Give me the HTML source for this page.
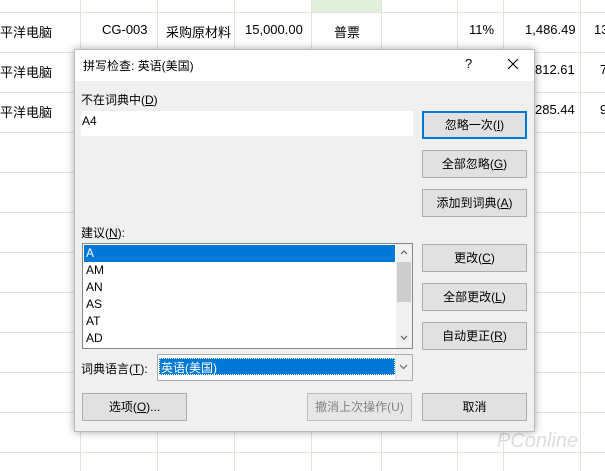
<!DOCTYPE html>
<html><head><meta charset="utf-8"><style>
*{margin:0;padding:0;box-sizing:border-box}
body{width:605px;height:471px;overflow:hidden;background:#fff;position:relative;font-family:"Liberation Sans","Noto Sans CJK SC",sans-serif;font-size:12px;color:#000}
.a{position:absolute}
.h{position:absolute;left:0;width:605px;height:1px;background:#dfe6da}
.v{position:absolute;top:0;width:1px;height:471px;background:#dfe6da}
.t{position:absolute;font-size:13px;white-space:nowrap}
.dlg{position:absolute;left:74px;top:49px;width:461px;height:383px;background:#f0f0f0;box-shadow:0 0 8px rgba(0,0,0,.35);border:1px solid #bbb}
.btn{position:absolute;width:105px;height:28px;background:#e1e1e1;border:1px solid #adadad;text-align:center;line-height:26px;font-size:12px}
.u{text-decoration:underline}
</style></head><body>
<div class="a" style="left:312px;top:0;width:69px;height:12px;background:#e2efda"></div>
<div class="h" style="top:12px"></div><div class="h" style="top:52px"></div><div class="h" style="top:92px"></div><div class="h" style="top:132px"></div><div class="h" style="top:172px"></div><div class="h" style="top:212px"></div><div class="h" style="top:252px"></div><div class="h" style="top:292px"></div><div class="h" style="top:332px"></div><div class="h" style="top:372px"></div><div class="h" style="top:412px"></div><div class="h" style="top:452px"></div>
<div class="v" style="left:80px"></div><div class="v" style="left:157px"></div><div class="v" style="left:234px"></div><div class="v" style="left:311px"></div><div class="v" style="left:381px"></div><div class="v" style="left:457px"></div><div class="v" style="left:503px"></div><div class="v" style="left:580px"></div>
<div class="t" style="left:0;top:22px">平洋电脑</div>
<div class="t" style="left:102px;top:22px">CG-003</div>
<div class="t" style="left:166px;top:22px">采购原材料</div>
<div class="t" style="left:245px;top:22px">15,000.00</div>
<div class="t" style="left:334px;top:22px">普票</div>
<div class="t" style="left:469px;top:22px">11%</div>
<div class="t" style="left:525px;top:22px">1,486.49</div>
<div class="t" style="left:594px;top:22px">13</div>
<div class="t" style="left:0;top:62px">平洋电脑</div>
<div class="t" style="left:535px;top:62px">812.61</div>
<div class="t" style="left:600px;top:62px">7</div>
<div class="t" style="left:0;top:102px">平洋电脑</div>
<div class="t" style="left:535px;top:102px">285.44</div>
<div class="t" style="left:600px;top:102px">9</div>
<div class="t" style="left:497px;top:430px;font-size:20px;color:#ddd;font-style:italic">PConline</div>

<div class="dlg">
<div class="a" style="left:0;top:0;width:459px;height:31px;background:#fff"></div>
<div class="t" style="left:8px;top:7px;font-size:12px">拼写检查: 英语(美国)</div>
<div class="t" style="left:390px;top:6px;font-size:13px">?</div>
<svg class="a" style="left:432px;top:8px" width="12" height="12"><path d="M1 1L11 11M11 1L1 11" stroke="#000" stroke-width="1.1"/></svg>
<div class="t" style="left:6px;top:41px;font-size:12px">不在词典中(<span class="u">D</span>)</div>
<div class="a" style="left:6px;top:61px;width:332px;height:25px;background:#fff"></div>
<div class="t" style="left:7px;top:64px;font-size:12px">A4</div>
<div class="btn" style="left:347px;top:61px;border:2px solid #0078d7;line-height:24px">忽略一次(<span class="u">I</span>)</div>
<div class="btn" style="left:347px;top:100px">全部忽略(<span class="u">G</span>)</div>
<div class="btn" style="left:347px;top:139px">添加到词典(<span class="u">A</span>)</div>
<div class="t" style="left:6px;top:174px;font-size:12px">建议(<span class="u">N</span>):</div>
<div class="a" style="left:7px;top:193px;width:331px;height:106px;background:#fff;border:1px solid #828790"></div>
<div class="a" style="left:9px;top:195px;width:311px;height:17px;background:#0078d7"></div>
<div class="t" style="left:11px;top:196px;font-size:12px;color:#fff">A</div>
<div class="t" style="left:11px;top:213px;font-size:12px">AM</div>
<div class="t" style="left:11px;top:230px;font-size:12px">AN</div>
<div class="t" style="left:11px;top:247px;font-size:12px">AS</div>
<div class="t" style="left:11px;top:264px;font-size:12px">AT</div>
<div class="t" style="left:11px;top:281px;font-size:12px">AD</div>
<div class="a" style="left:321px;top:194px;width:16px;height:104px;background:#f0f0f0"></div>
<div class="a" style="left:322px;top:212px;width:14px;height:40px;background:#cdcdcd"></div>
<svg class="a" style="left:325px;top:199px" width="8" height="6"><path d="M1 5L4 2L7 5" stroke="#606060" fill="none" stroke-width="1.2"/></svg>
<svg class="a" style="left:325px;top:285px" width="8" height="6"><path d="M1 1L4 4L7 1" stroke="#606060" fill="none" stroke-width="1.2"/></svg>
<div class="btn" style="left:347px;top:194px">更改(<span class="u">C</span>)</div>
<div class="btn" style="left:347px;top:233px">全部更改(<span class="u">L</span>)</div>
<div class="btn" style="left:347px;top:272px">自动更正(<span class="u">R</span>)</div>
<div class="t" style="left:6px;top:310px;font-size:12px">词典语言(<span class="u">T</span>):</div>
<div class="a" style="left:82px;top:304px;width:256px;height:27px;background:#fff;border:1px solid #adadad"></div>
<div class="a" style="left:84px;top:308px;width:236px;height:17px;background:#0078d7;border:1px dotted #fff"></div>
<div class="t" style="left:86px;top:309px;font-size:12px;color:#fff">英语(美国)</div>
<div class="a" style="left:320px;top:305px;width:17px;height:25px;background:#f0f0f0;border-left:1px solid #ddd"></div>
<svg class="a" style="left:324px;top:314px" width="9" height="6"><path d="M1 1L4.5 4.5L8 1" stroke="#606060" fill="none" stroke-width="1.1"/></svg>
<div class="btn" style="left:7px;top:343px">选项(<span class="u">O</span>)...</div>
<div class="btn" style="left:232px;top:343px;color:#838383;border-color:#bfbfbf;background:#e6e6e6">撤消上次操作(U)</div>
<div class="btn" style="left:347px;top:343px">取消</div>
</div>
</body></html>
